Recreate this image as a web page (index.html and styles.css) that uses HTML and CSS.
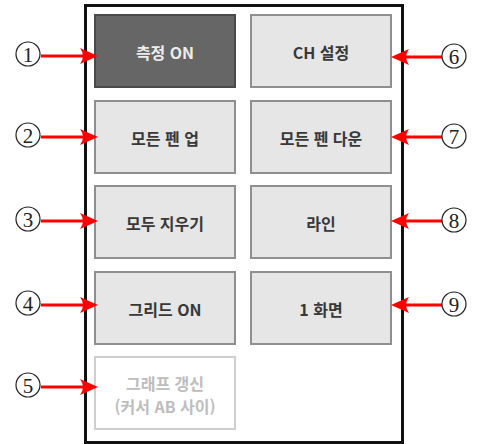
FILE: index.html
```html
<!DOCTYPE html>
<html lang="ko">
<head>
<meta charset="utf-8">
<link rel="stylesheet" href="styles.css">
</head>
<body>
<div class="page">
  <div class="frame">
    <div class="grid">
      <div class="btn btn-dark">측정 ON</div>
      <div class="btn">CH 설정</div>
      <div class="btn">모든 펜 업</div>
      <div class="btn">모든 펜 다운</div>
      <div class="btn">모두 지우기</div>
      <div class="btn">라인</div>
      <div class="btn">그리드 ON</div>
      <div class="btn">1 화면</div>
      <div class="btn btn-disabled">그래프 갱신<br>(커서 AB 사이)</div>
    </div>
  </div>
  <svg class="notes" width="477" height="444" viewBox="0 0 477 444">
    <defs>
      <g id="ahL"><path d="M0,0 L-18,-8 Q-12,0 -18,8 Z" fill="#ff0000"/></g>
      <g id="ahR"><path d="M0,0 L18,-8 Q12,0 18,8 Z" fill="#ff0000"/></g>
    </defs>
    <g class="left">
      <line x1="41" y1="56" x2="86" y2="56"/><use href="#ahL" x="98" y="56"/>
      <line x1="41" y1="137" x2="86" y2="137"/><use href="#ahL" x="98" y="137"/>
      <line x1="41" y1="221" x2="86" y2="221"/><use href="#ahL" x="98" y="221"/>
      <line x1="41" y1="305" x2="86" y2="305"/><use href="#ahL" x="98" y="305"/>
      <line x1="41" y1="387" x2="86" y2="387"/><use href="#ahL" x="98" y="387"/>
    </g>
    <g class="right">
      <line x1="403" y1="57" x2="442" y2="57"/><use href="#ahR" x="391" y="57"/>
      <line x1="403" y1="137" x2="442" y2="137"/><use href="#ahR" x="391" y="137"/>
      <line x1="403" y1="221" x2="442" y2="221"/><use href="#ahR" x="391" y="221"/>
      <line x1="403" y1="305" x2="442" y2="305"/><use href="#ahR" x="391" y="305"/>
    </g>
    <g class="circ">
      <circle cx="28" cy="54" r="12"/><text x="28" y="54.5">1</text>
      <circle cx="28" cy="135" r="12"/><text x="28" y="135.5">2</text>
      <circle cx="28" cy="219" r="12"/><text x="28" y="219.5">3</text>
      <circle cx="28" cy="303" r="12"/><text x="28" y="303.5">4</text>
      <circle cx="28" cy="385" r="12"/><text x="28" y="385.5">5</text>
      <circle cx="454" cy="56" r="12"/><text x="454" y="56.5">6</text>
      <circle cx="454" cy="136" r="12"/><text x="454" y="136.5">7</text>
      <circle cx="454" cy="220" r="12"/><text x="454" y="220.5">8</text>
      <circle cx="454" cy="304" r="12"/><text x="454" y="304.5">9</text>
    </g>
  </svg>
</div>
</body>
</html>
```

FILE: styles.css
```css
html, body {
  margin: 0;
  padding: 0;
  background: #ffffff;
}

.page {
  position: relative;
  width: 477px;
  height: 444px;
  overflow: hidden;
  padding-top: 4px;
  padding-left: 84px;
  box-sizing: border-box;
}

.frame {
  width: 320px;
  height: 440px;
  box-sizing: border-box;
  border: 3px solid #111111;
  padding: 7px 9px 0 7px;
}

.grid {
  display: grid;
  grid-template-columns: 142px 142px;
  grid-auto-rows: 74px;
  column-gap: 14px;
  row-gap: 11.5px;
}

.btn {
  display: flex;
  align-items: center;
  justify-content: center;
  text-align: center;
  box-sizing: border-box;
  background: #e6e6e6;
  border: 2px solid #8f8f8f;
  color: #383838;
  font-family: "Noto Sans CJK KR", "Noto Sans", sans-serif;
  font-weight: 700;
  font-size: 16px;
  line-height: 23px;
  padding-top: 3px;
}

.btn-dark {
  background: #666666;
  border-color: #4a4a4a;
  color: #ececec;
}

.btn-disabled {
  background: #ffffff;
  border-color: #cfcfcf;
  color: #bdbdbd;
}

.notes {
  position: absolute;
  left: 0;
  top: 0;
}

.notes line {
  stroke: #ff0000;
  stroke-width: 3;
}

.circ circle {
  fill: none;
  stroke: #222222;
  stroke-width: 1.2;
}

.circ text {
  font-family: "Liberation Serif", serif;
  font-size: 21px;
  fill: #222222;
  text-anchor: middle;
  dominant-baseline: central;
}
```
